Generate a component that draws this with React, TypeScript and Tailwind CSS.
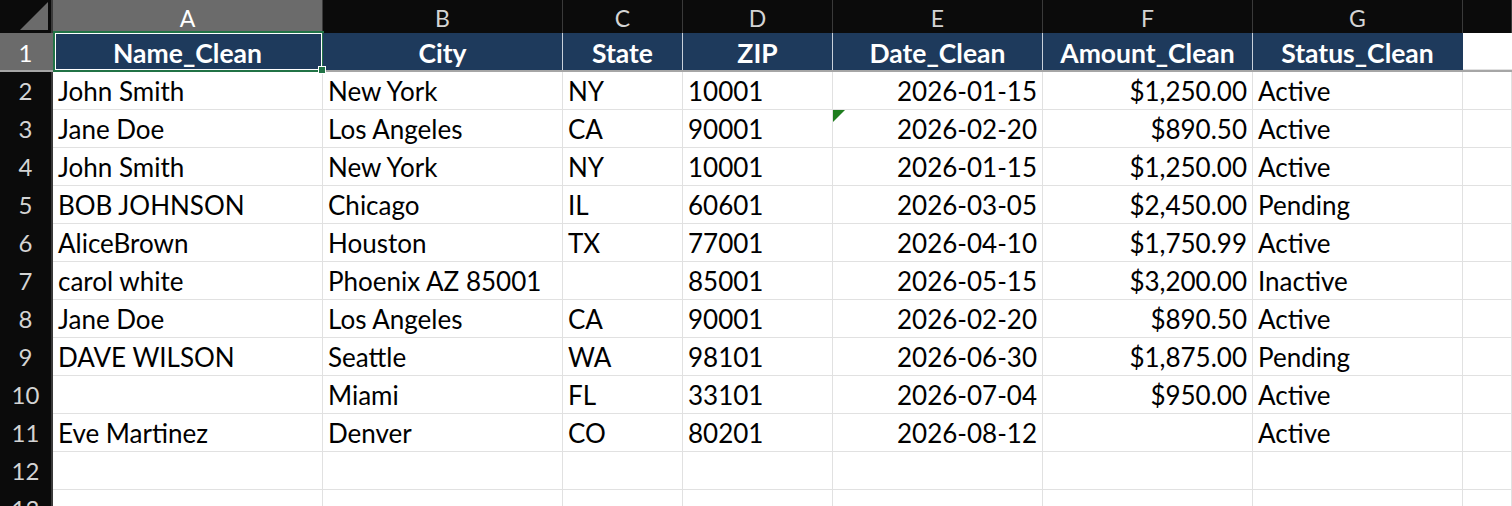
import React from 'react';

const cols = ['A', 'B', 'C', 'D', 'E', 'F', 'G', ''];
const headers = ['Name_Clean', 'City', 'State', 'ZIP', 'Date_Clean', 'Amount_Clean', 'Status_Clean'];

const rows: string[][] = [
  ['John Smith', 'New York', 'NY', '10001', '2026-01-15', '$1,250.00', 'Active'],
  ['Jane Doe', 'Los Angeles', 'CA', '90001', '2026-02-20', '$890.50', 'Active'],
  ['John Smith', 'New York', 'NY', '10001', '2026-01-15', '$1,250.00', 'Active'],
  ['BOB JOHNSON', 'Chicago', 'IL', '60601', '2026-03-05', '$2,450.00', 'Pending'],
  ['AliceBrown', 'Houston', 'TX', '77001', '2026-04-10', '$1,750.99', 'Active'],
  ['carol white', 'Phoenix AZ 85001', '', '85001', '2026-05-15', '$3,200.00', 'Inactive'],
  ['Jane Doe', 'Los Angeles', 'CA', '90001', '2026-02-20', '$890.50', 'Active'],
  ['DAVE WILSON', 'Seattle', 'WA', '98101', '2026-06-30', '$1,875.00', 'Pending'],
  ['', 'Miami', 'FL', '33101', '2026-07-04', '$950.00', 'Active'],
  ['Eve Martinez', 'Denver', 'CO', '80201', '2026-08-12', '', 'Active'],
  ['', '', '', '', '', '', ''],
  ['', '', '', '', '', '', ''],
];

const gridCols = 'grid grid-cols-[53px_270px_240px_120px_150px_210px_210px_210px_1fr]';

export default function App() {
  return (
    <div className="w-[1512px] h-[506px] overflow-hidden bg-white font-['Lato','Open_Sans',sans-serif] text-[26px] leading-[30px] text-black">
      {/* column letters */}
      <div className={`${gridCols} h-[33px] bg-[#0b0b0b]`}>
        <div className="relative border-r-2 border-[#3a3a3a]">
          <svg className="absolute left-0 top-0" width="51" height="33">
            <polygon points="20,30 48,30 48,2" fill="#6b6b6b" />
          </svg>
        </div>
        {cols.map((c, i) => (
          <div
            key={i}
            className={`flex items-center justify-center border-r border-[#3a3a3a] text-[23px] leading-[26px] pt-0.5 ${
              c === 'A' ? 'bg-[#6b6b6b] text-white' : 'text-[#d4d4d4]'
            }`}
          >
            {c}
          </div>
        ))}
      </div>

      {/* row 1 - headers */}
      <div className={`${gridCols} h-[39px] border-b-2 border-[#a6a6a6]`}>
        <div className="flex items-center justify-center bg-[#6b6b6b] text-white text-[24px] border-r-2 border-[#6b6b6b] pt-[2px]">
          1
        </div>
        {headers.map((h, i) => (
          <div
            key={h}
            className={`relative flex items-center justify-center pt-[2px] bg-[#1e3a5c] text-white font-bold text-[26.5px] border-r ${
              i === 6 ? 'border-[#1e3a5c]' : 'border-[#c8d0da]'
            }`}
          >
            {h}
            {i === 0 && (
              <>
                <div className="absolute left-0 -top-[2px] w-[271px] h-[41px] border-2 border-[#217346] pointer-events-none">
                  <div className="w-full h-full border border-white" />
                </div>
                <div className="absolute -right-[4px] -bottom-[4px] w-[8px] h-[8px] bg-[#217346] border border-white z-10" />
              </>
            )}
          </div>
        ))}
        <div className="border-b border-[#e1e1e1]" />
      </div>

      {rows.map((r, ri) => (
        <div key={ri} className={`${gridCols} h-[38px]`}>
          <div className="flex items-center justify-center bg-[#0b0b0b] text-[#d4d4d4] text-[24px] border-r-2 border-[#3a3a3a]">
            {ri + 2}
          </div>
          {[...r, ''].map((v, ci) => (
            <div
              key={ci}
              className={`relative flex items-center px-[5px] border-r border-b border-[#e1e1e1] whitespace-nowrap ${
                ci === 4 || ci === 5 ? 'justify-end' : 'justify-start'
              }`}
            >
              {ri === 1 && ci === 4 && (
                <svg className="absolute left-0 top-0" width="12" height="12">
                  <polygon points="0,0 12,0 0,12" fill="#1e7d1e" />
                </svg>
              )}
              {v}
            </div>
          ))}
        </div>
      ))}
    </div>
  );
}
